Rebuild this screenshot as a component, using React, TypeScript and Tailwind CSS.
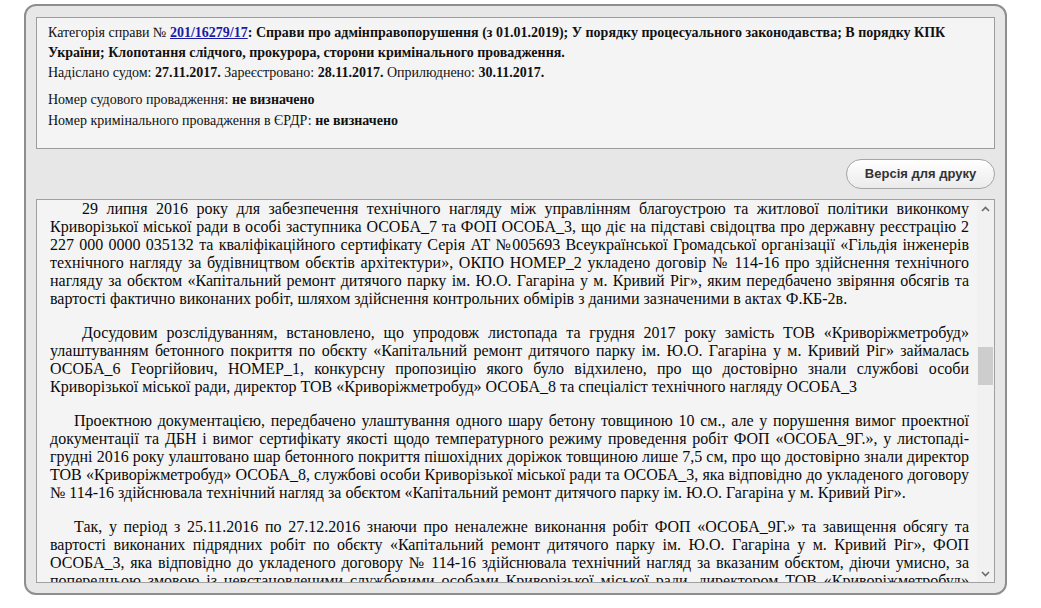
import React from "react";

const serif = "font-['Liberation_Serif','Times_New_Roman',serif]";

function Chevron({ up }: { up?: boolean }) {
  return (
    <svg width="9" height="6" viewBox="0 0 9 6" className="block">
      <path
        d={up ? "M1 5 L4.5 1.5 L8 5" : "M1 1 L4.5 4.5 L8 1"}
        fill="none"
        stroke="#6b6b6b"
        strokeWidth="1.6"
      />
    </svg>
  );
}

export default function App() {
  return (
    <div className="min-h-screen bg-white pl-[24px] pt-[4px]">
      <div className="flex h-[591px] w-[983px] flex-col rounded-[12px] border-2 border-[#8e8e8e] bg-[#e7e7e7] px-[10px] pb-[10px] pt-[11px]">
        <div className={`border border-[#9c9c9c] bg-[#f4f4f4] px-[11px] pb-[17px] pt-[5px] text-[14px] text-[#111] ${serif}`}>
          <p className="leading-[20px]">
            Категорія справи №{" "}
            <a href="#" className="font-bold text-[#1a1aa6] underline">
              201/16279/17
            </a>
            <b>
              : Справи про адмінправопорушення (з 01.01.2019); У порядку процесуального законодавства; В порядку КПК
              України; Клопотання слідчого, прокурора, сторони кримінального провадження.
            </b>
          </p>
          <p className="leading-[20px]">
            Надіслано судом: <b>27.11.2017.</b> Зареєстровано: <b>28.11.2017.</b> Оприлюднено: <b>30.11.2017.</b>
          </p>
          <p className="mt-[7px] leading-[20px]">
            Номер судового провадження: <b>не визначено</b>
          </p>
          <p className="mt-[1px] leading-[20px]">
            Номер кримінального провадження в ЄРДР: <b>не визначено</b>
          </p>
        </div>

        <div className="mt-[10px] flex justify-end">
          <button className="h-[30px] w-[149px] rounded-[15px] border border-[#a5a5a5] bg-linear-to-b from-white to-[#ebebeb] font-['Liberation_Sans',Arial,sans-serif] text-[13px] font-bold text-[#333]">
            Версія для друку
          </button>
        </div>

        <div className="mt-[10px] flex min-h-0 flex-1 border border-[#a0a0a0] bg-[#f4f4f4]">
          <div className={`min-w-0 flex-1 overflow-hidden pl-[13px] pr-[8px] text-justify text-[16px] leading-[18px] text-[#0a0a0a] ${serif}`}>
            <p className="mb-[16px] indent-[32px]">
              29 липня 2016 року для забезпечення технічного нагляду між управлінням благоустрою та житлової політики
              виконкому Криворізької міської ради в особі заступника ОСОБА_7 та ФОП ОСОБА_3, що діє на підставі
              свідоцтва про державну реєстрацію 2 227 000 0000 035132 та кваліфікаційного сертифікату Серія АТ №005693
              Всеукраїнської Громадської організації «Гільдія інженерів технічного нагляду за будівництвом обєктів
              архітектури», ОКПО НОМЕР_2 укладено договір № 114-16 про здійснення технічного нагляду за обєктом
              «Капітальний ремонт дитячого парку ім. Ю.О. Гагаріна у м. Кривий Ріг», яким передбачено звіряння обсягів
              та вартості фактично виконаних робіт, шляхом здійснення контрольних обмірів з даними зазначеними в актах
              Ф.КБ-2в.
            </p>
            <p className="mb-[16px] indent-[32px]">
              Досудовим розслідуванням, встановлено, що упродовж листопада та грудня 2017 року замість ТОВ
              «Криворіжметробуд» улаштуванням бетонного покриття по обєкту «Капітальний ремонт дитячого парку ім. Ю.О.
              Гагаріна у м. Кривий Ріг» займалась ОСОБА_6 Георгійович, НОМЕР_1, конкурсну пропозицію якого було
              відхилено, про що достовірно знали службові особи Криворізької міської ради, директор ТОВ
              «Криворіжметробуд» ОСОБА_8 та спеціаліст технічного нагляду ОСОБА_3
            </p>
            <p className="mb-[16px] indent-[24px]">
              Проектною документацією, передбачено улаштування одного шару бетону товщиною 10 см., але у порушення
              вимог проектної документації та ДБН і вимог сертифікату якості щодо температурного режиму проведення робіт
              ФОП «ОСОБА_9Г.», у листопаді-грудні 2016 року улаштовано шар бетонного покриття пішохідних доріжок
              товщиною лише 7,5 см, про що достовірно знали директор ТОВ «Криворіжметробуд» ОСОБА_8, службові особи
              Криворізької міської ради та ОСОБА_3, яка відповідно до укладеного договору № 114-16 здійснювала
              технічний нагляд за обєктом «Капітальний ремонт дитячого парку ім. Ю.О. Гагаріна у м. Кривий Ріг».
            </p>
            <p className="mb-[16px] indent-[24px]">
              Так, у період з 25.11.2016 по 27.12.2016 знаючи про неналежне виконання робіт ФОП «ОСОБА_9Г.» та
              завищення обсягу та вартості виконаних підрядних робіт по обєкту «Капітальний ремонт дитячого парку ім.
              Ю.О. Гагаріна у м. Кривий Ріг», ФОП ОСОБА_3, яка відповідно до укладеного договору № 114-16 здійснювала
              технічний нагляд за вказаним обєктом, діючи умисно, за попередньою змовою із невстановленими службовими
              особами Криворізької міської ради, директором ТОВ «Криворіжметробуд» ОСОБА_8, підписала акти приймання
              виконаних будівельних робіт форми КБ-2в.
            </p>
          </div>
          <div className="flex w-[17px] flex-col bg-[#f1f1f1]">
            <div className="flex h-[17px] items-center justify-center">
              <Chevron up />
            </div>
            <div className="flex-1 px-[1px] pt-[130px]">
              <div className="h-[38px] bg-[#cdcdcd]" />
            </div>
            <div className="flex h-[17px] items-center justify-center">
              <Chevron />
            </div>
          </div>
        </div>
      </div>
    </div>
  );
}
